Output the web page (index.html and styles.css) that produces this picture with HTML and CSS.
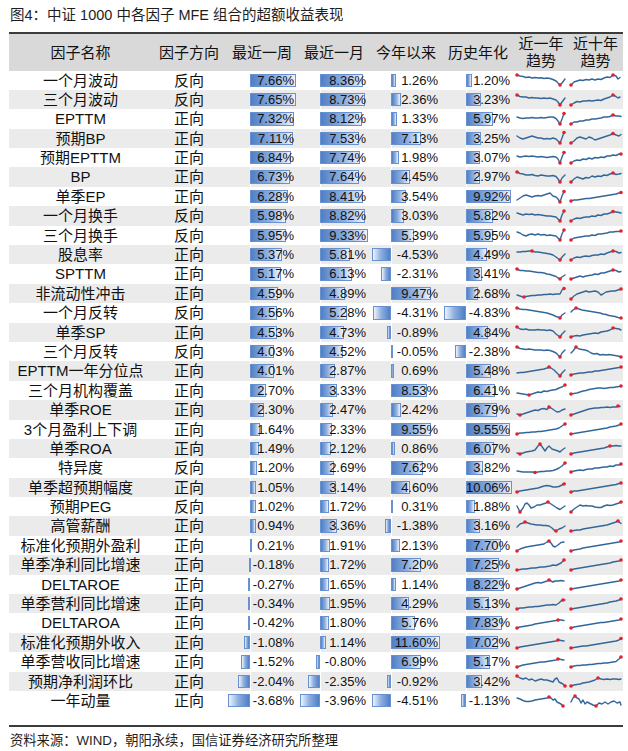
FILE: index.html
```html
<!DOCTYPE html>
<html lang="zh-CN">
<head>
<meta charset="utf-8">
<title>中证1000 MFE 组合超额收益</title>
<link rel="stylesheet" href="styles.css">
</head>
<body>
<div class="page">
  <div class="title">图4：中证 1000 中各因子 MFE 组合的超额收益表现</div>
  <div class="row head">
    <div>因子名称</div><div>因子方向</div><div>最近一周</div><div>最近一月</div><div>今年以来</div><div>历史年化</div><div>近一年<br>趋势</div><div>近十年<br>趋势</div>
  </div>
  <div class="rows">
    <div class="row"><div class="nm">一个月波动</div><div class="dir">反向</div>
      <div class="n w"><b class="bar" style="--v:7.66"></b><span>7.66%</span></div>
      <div class="n m"><b class="bar" style="--v:8.36"></b><span>8.36%</span></div>
      <div class="n y"><b class="bar" style="--v:1.26"></b><span>1.26%</span></div>
      <div class="n h"><b class="bar" style="--v:1.20"></b><span>1.20%</span></div>
      <div class="sp"><svg width="50" height="14" viewBox="0 0 50 14"><polyline points="1,2 4,3 7,3.5 10,4.5 13,4 16,5 19,4.5 22,5 25,4.8 28,5.5 31,5 34,5.5 37,6.5 40,8 42,10 44,12 46,10 49,6"/><circle cx="1" cy="2" r="1.8"/><circle cx="44" cy="12" r="1.8"/></svg></div>
      <div class="sp"><svg width="52" height="14" viewBox="0 0 52 14"><polyline points="1,12 4,9 7,8 10,7 13,7.5 16,6.5 19,7 22,6 25,7 28,6 31,6.5 34,5 37,4 40,4.5 43,2 46,3 48,6 50,4.5"/><circle cx="1" cy="12" r="1.8"/><circle cx="43" cy="2" r="1.8"/></svg></div>
    </div>
    <div class="row"><div class="nm">三个月波动</div><div class="dir">反向</div>
      <div class="n w"><b class="bar" style="--v:7.65"></b><span>7.65%</span></div>
      <div class="n m"><b class="bar" style="--v:8.73"></b><span>8.73%</span></div>
      <div class="n y"><b class="bar" style="--v:2.36"></b><span>2.36%</span></div>
      <div class="n h"><b class="bar" style="--v:3.23"></b><span>3.23%</span></div>
      <div class="sp"><svg width="50" height="14" viewBox="0 0 50 14"><polyline points="1,2 4,3.5 7,4 10,4 13,5 16,4.5 19,5 22,5 25,5.5 28,5 31,5.5 34,5 37,6 40,7 42,9 44,12 46,9 49,5"/><circle cx="1" cy="2" r="1.8"/><circle cx="44" cy="12" r="1.8"/></svg></div>
      <div class="sp"><svg width="52" height="14" viewBox="0 0 52 14"><polyline points="1,12 4,10 7,8.5 10,9 13,8 16,8 19,7.5 22,8 25,7.5 28,7 31,7.5 34,6 37,5 40,4 43,2 46,3.5 48,5 50,4"/><circle cx="1" cy="12" r="1.8"/><circle cx="43" cy="2" r="1.8"/></svg></div>
    </div>
    <div class="row"><div class="nm">EPTTM</div><div class="dir">正向</div>
      <div class="n w"><b class="bar" style="--v:7.32"></b><span>7.32%</span></div>
      <div class="n m"><b class="bar" style="--v:8.12"></b><span>8.12%</span></div>
      <div class="n y"><b class="bar" style="--v:1.33"></b><span>1.33%</span></div>
      <div class="n h"><b class="bar" style="--v:5.97"></b><span>5.97%</span></div>
      <div class="sp"><svg width="50" height="14" viewBox="0 0 50 14"><polyline points="1,5 4,6 7,6.5 10,6 13,6 16,5.5 19,6 22,6 25,5.5 28,6 31,5.5 34,5 37,5 40,6.5 42,9 44,12 46,7 48,1.5"/><circle cx="44" cy="12" r="1.8"/><circle cx="48" cy="1.5" r="1.8"/></svg></div>
      <div class="sp"><svg width="52" height="14" viewBox="0 0 52 14"><polyline points="1,12 4,10 7,10 10,9 13,9 16,8 19,8 22,7 25,7 28,6.5 31,6 34,5 37,5 40,4.5 43,3 46,4 49,4 51,4.5"/><circle cx="1" cy="12" r="1.8"/><circle cx="43" cy="3" r="1.8"/></svg></div>
    </div>
    <div class="row"><div class="nm">预期BP</div><div class="dir">正向</div>
      <div class="n w"><b class="bar" style="--v:7.11"></b><span>7.11%</span></div>
      <div class="n m"><b class="bar" style="--v:7.53"></b><span>7.53%</span></div>
      <div class="n y"><b class="bar" style="--v:7.13"></b><span>7.13%</span></div>
      <div class="n h"><b class="bar" style="--v:3.25"></b><span>3.25%</span></div>
      <div class="sp"><svg width="50" height="14" viewBox="0 0 50 14"><polyline points="1,5 4,7 7,8 10,7 13,6 16,5 19,6 22,7 25,7 28,8 31,7.5 34,8 37,7 40,8 42,10 44,12 46,7 48,1.5"/><circle cx="44" cy="12" r="1.8"/><circle cx="48" cy="1.5" r="1.8"/></svg></div>
      <div class="sp"><svg width="52" height="14" viewBox="0 0 52 14"><polyline points="1,12 4,10 7,7 10,6 13,7 16,8 19,6 22,7 25,9 28,8 31,7 34,6 37,5 40,4 43,2.5 46,4 49,5 51,3.5"/><circle cx="1" cy="12" r="1.8"/><circle cx="43" cy="2.5" r="1.8"/></svg></div>
    </div>
    <div class="row"><div class="nm">预期EPTTM</div><div class="dir">正向</div>
      <div class="n w"><b class="bar" style="--v:6.84"></b><span>6.84%</span></div>
      <div class="n m"><b class="bar" style="--v:7.74"></b><span>7.74%</span></div>
      <div class="n y"><b class="bar" style="--v:1.98"></b><span>1.98%</span></div>
      <div class="n h"><b class="bar" style="--v:3.07"></b><span>3.07%</span></div>
      <div class="sp"><svg width="50" height="14" viewBox="0 0 50 14"><polyline points="1,5 4,6 7,5.5 10,5 13,5.5 16,5 19,5.5 22,6 25,5.5 28,6 31,6.5 34,6 37,5.5 40,6 42,8 44,12 46,6 48,1.5"/><circle cx="44" cy="12" r="1.8"/><circle cx="48" cy="1.5" r="1.8"/></svg></div>
      <div class="sp"><svg width="52" height="14" viewBox="0 0 52 14"><polyline points="1,12 4,10 7,9 10,9.5 13,8 16,8.5 19,7 22,8 25,6.5 28,7 31,6 34,6.5 37,5 40,5 43,4 46,4.5 49,3 51,3"/><circle cx="1" cy="12" r="1.8"/><circle cx="51" cy="3" r="1.8"/></svg></div>
    </div>
    <div class="row"><div class="nm">BP</div><div class="dir">正向</div>
      <div class="n w"><b class="bar" style="--v:6.73"></b><span>6.73%</span></div>
      <div class="n m"><b class="bar" style="--v:7.64"></b><span>7.64%</span></div>
      <div class="n y"><b class="bar" style="--v:4.45"></b><span>4.45%</span></div>
      <div class="n h"><b class="bar" style="--v:2.97"></b><span>2.97%</span></div>
      <div class="sp"><svg width="50" height="14" viewBox="0 0 50 14"><polyline points="1,2 4,3.5 7,4 10,5 13,5 16,4.5 19,5.5 22,6 25,5 28,5.5 31,6 34,6 37,5.5 40,6.5 42,9 44,12 46,8 49,5"/><circle cx="1" cy="2" r="1.8"/><circle cx="44" cy="12" r="1.8"/></svg></div>
      <div class="sp"><svg width="52" height="14" viewBox="0 0 52 14"><polyline points="1,12 4,9 7,7 10,8 13,9 16,7.5 19,8 22,6 25,7 28,6 31,6.5 34,5 37,5.5 40,4 43,3 46,4.5 49,4 51,3.5"/><circle cx="1" cy="12" r="1.8"/><circle cx="43" cy="3" r="1.8"/></svg></div>
    </div>
    <div class="row"><div class="nm">单季EP</div><div class="dir">正向</div>
      <div class="n w"><b class="bar" style="--v:6.28"></b><span>6.28%</span></div>
      <div class="n m"><b class="bar" style="--v:8.41"></b><span>8.41%</span></div>
      <div class="n y"><b class="bar" style="--v:3.54"></b><span>3.54%</span></div>
      <div class="n h"><b class="bar" style="--v:9.92"></b><span>9.92%</span></div>
      <div class="sp"><svg width="50" height="14" viewBox="0 0 50 14"><polyline points="1,10 4,8 7,6 10,5 13,6 16,7 19,6 22,5.5 25,6 28,5 31,4 34,3 37,6 40,7 42,9 44,12 46,6 48,1.5"/><circle cx="44" cy="12" r="1.8"/><circle cx="48" cy="1.5" r="1.8"/></svg></div>
      <div class="sp"><svg width="52" height="14" viewBox="0 0 52 14"><polyline points="1,11 4,10 7,10 10,9.5 13,9 16,8.5 19,8.5 22,8 25,7.5 28,7 31,6.5 34,6 37,5.5 40,5 43,4.5 46,4 49,3 51,2.5"/><circle cx="1" cy="11" r="1.8"/><circle cx="51" cy="2.5" r="1.8"/></svg></div>
    </div>
    <div class="row"><div class="nm">一个月换手</div><div class="dir">反向</div>
      <div class="n w"><b class="bar" style="--v:5.98"></b><span>5.98%</span></div>
      <div class="n m"><b class="bar" style="--v:8.82"></b><span>8.82%</span></div>
      <div class="n y"><b class="bar" style="--v:3.03"></b><span>3.03%</span></div>
      <div class="n h"><b class="bar" style="--v:5.82"></b><span>5.82%</span></div>
      <div class="sp"><svg width="50" height="14" viewBox="0 0 50 14"><polyline points="1,4 4,5 7,6 10,5 13,5.5 16,5 19,6 22,5.5 25,6 28,6.5 31,7 34,7 37,7.5 40,8 42,10 44,12 46,6 48,2"/><circle cx="44" cy="12" r="1.8"/><circle cx="48" cy="2" r="1.8"/></svg></div>
      <div class="sp"><svg width="52" height="14" viewBox="0 0 52 14"><polyline points="1,12 4,10 7,9 10,9.5 13,8.5 16,8 19,8 22,7 25,7.5 28,6 31,6.5 34,5 37,5 40,4 43,2.5 46,3 49,3.5 51,4"/><circle cx="1" cy="12" r="1.8"/><circle cx="43" cy="2.5" r="1.8"/></svg></div>
    </div>
    <div class="row"><div class="nm">三个月换手</div><div class="dir">反向</div>
      <div class="n w"><b class="bar" style="--v:5.95"></b><span>5.95%</span></div>
      <div class="n m"><b class="bar" style="--v:9.33"></b><span>9.33%</span></div>
      <div class="n y"><b class="bar" style="--v:5.39"></b><span>5.39%</span></div>
      <div class="n h"><b class="bar" style="--v:5.95"></b><span>5.95%</span></div>
      <div class="sp"><svg width="50" height="14" viewBox="0 0 50 14"><polyline points="1,4 4,5 7,7 10,8 13,6.5 16,6 19,7 22,6 25,7 28,6.5 31,7.5 34,7 37,7.5 40,8 42,10 44,12 46,6 48,2"/><circle cx="44" cy="12" r="1.8"/><circle cx="48" cy="2" r="1.8"/></svg></div>
      <div class="sp"><svg width="52" height="14" viewBox="0 0 52 14"><polyline points="1,12 4,10 7,9.5 10,9 13,8.5 16,8 19,8 22,7 25,7.5 28,6 31,6 34,5.5 37,5 40,4 43,4 46,3.5 49,3.5 51,3"/><circle cx="1" cy="12" r="1.8"/><circle cx="51" cy="3" r="1.8"/></svg></div>
    </div>
    <div class="row"><div class="nm">股息率</div><div class="dir">正向</div>
      <div class="n w"><b class="bar" style="--v:5.37"></b><span>5.37%</span></div>
      <div class="n m"><b class="bar" style="--v:5.81"></b><span>5.81%</span></div>
      <div class="n y"><b class="bar neg" style="--v:-4.53"></b><span>-4.53%</span></div>
      <div class="n h"><b class="bar" style="--v:4.49"></b><span>4.49%</span></div>
      <div class="sp"><svg width="50" height="14" viewBox="0 0 50 14"><polyline points="1,4 4,4 7,3.5 10,3.5 13,3 16,3 19,4 22,4 25,4.5 28,5 31,5.5 34,6 37,7 40,9 42,10.5 44,12 46,9 49,6"/><circle cx="16" cy="3" r="1.8"/><circle cx="44" cy="12" r="1.8"/></svg></div>
      <div class="sp"><svg width="52" height="14" viewBox="0 0 52 14"><polyline points="1,12 4,10 7,9 10,9.5 13,8.5 16,8 19,8.5 22,7.5 25,7 28,7 31,6 34,6.5 37,5 40,4 43,3 46,3.5 49,5 51,4.5"/><circle cx="1" cy="12" r="1.8"/><circle cx="43" cy="3" r="1.8"/></svg></div>
    </div>
    <div class="row"><div class="nm">SPTTM</div><div class="dir">正向</div>
      <div class="n w"><b class="bar" style="--v:5.17"></b><span>5.17%</span></div>
      <div class="n m"><b class="bar" style="--v:6.13"></b><span>6.13%</span></div>
      <div class="n y"><b class="bar neg" style="--v:-2.31"></b><span>-2.31%</span></div>
      <div class="n h"><b class="bar" style="--v:3.41"></b><span>3.41%</span></div>
      <div class="sp"><svg width="50" height="14" viewBox="0 0 50 14"><polyline points="1,2 4,3.5 7,3.5 10,4 13,4 16,4.5 19,5 22,5.5 25,5.5 28,6 31,7 34,7.5 37,8.5 40,9.5 42,11 44,12 46,10 49,8"/><circle cx="1" cy="2" r="1.8"/><circle cx="44" cy="12" r="1.8"/></svg></div>
      <div class="sp"><svg width="52" height="14" viewBox="0 0 52 14"><polyline points="1,12 4,11 7,10 10,9 13,10 16,9 19,8.5 22,8 25,7 28,7.5 31,6 34,6 37,5 40,4 43,3 46,3.5 49,5 51,4.5"/><circle cx="1" cy="12" r="1.8"/><circle cx="43" cy="3" r="1.8"/></svg></div>
    </div>
    <div class="row"><div class="nm">非流动性冲击</div><div class="dir">正向</div>
      <div class="n w"><b class="bar" style="--v:4.59"></b><span>4.59%</span></div>
      <div class="n m"><b class="bar" style="--v:4.89"></b><span>4.89%</span></div>
      <div class="n y"><b class="bar" style="--v:9.47"></b><span>9.47%</span></div>
      <div class="n h"><b class="bar" style="--v:2.68"></b><span>2.68%</span></div>
      <div class="sp"><svg width="50" height="14" viewBox="0 0 50 14"><polyline points="1,8 4,9 7,10 10,9.5 13,9 16,8.5 19,8.5 22,8 25,8 28,7.5 31,7.5 34,7 37,7.5 40,7 42,7 44,7 46,3 48,1.5"/><circle cx="8" cy="10" r="1.8"/><circle cx="48" cy="1.5" r="1.8"/></svg></div>
      <div class="sp"><svg width="52" height="14" viewBox="0 0 52 14"><polyline points="1,12 4,9 7,7 10,6 13,5 16,4 19,5 22,4.5 25,4 28,5 31,8 33,7 36,5 39,4.5 42,4 45,4 48,3 51,2"/><circle cx="1" cy="12" r="1.8"/><circle cx="51" cy="2" r="1.8"/></svg></div>
    </div>
    <div class="row"><div class="nm">一个月反转</div><div class="dir">反向</div>
      <div class="n w"><b class="bar" style="--v:4.56"></b><span>4.56%</span></div>
      <div class="n m"><b class="bar" style="--v:5.28"></b><span>5.28%</span></div>
      <div class="n y"><b class="bar neg" style="--v:-4.31"></b><span>-4.31%</span></div>
      <div class="n h"><b class="bar neg" style="--v:-4.83"></b><span>-4.83%</span></div>
      <div class="sp"><svg width="50" height="14" viewBox="0 0 50 14"><polyline points="1,2 4,3 7,3.5 10,3.5 13,4 16,4.5 19,5 22,5.5 25,6 28,6.5 31,7 34,8 37,9 40,10.5 42,11 44,12 46,9 49,7"/><circle cx="1" cy="2" r="1.8"/><circle cx="44" cy="12" r="1.8"/></svg></div>
      <div class="sp"><svg width="52" height="14" viewBox="0 0 52 14"><polyline points="1,6 3,4 6,2 9,3 12,4 15,4.5 18,5 21,5.5 24,6 27,6.5 30,7 33,8 36,8.5 39,9.5 42,10 45,10.5 48,11.5 51,12"/><circle cx="6" cy="2" r="1.8"/><circle cx="51" cy="12" r="1.8"/></svg></div>
    </div>
    <div class="row"><div class="nm">单季SP</div><div class="dir">正向</div>
      <div class="n w"><b class="bar" style="--v:4.53"></b><span>4.53%</span></div>
      <div class="n m"><b class="bar" style="--v:4.73"></b><span>4.73%</span></div>
      <div class="n y"><b class="bar neg" style="--v:-0.89"></b><span>-0.89%</span></div>
      <div class="n h"><b class="bar" style="--v:4.84"></b><span>4.84%</span></div>
      <div class="sp"><svg width="50" height="14" viewBox="0 0 50 14"><polyline points="1,2 4,4 7,4.5 10,4 13,5 16,5 19,5 22,4.5 25,5 28,5 31,5.5 34,5 37,6 40,9 42,10.5 44,12 46,9 49,6"/><circle cx="1" cy="2" r="1.8"/><circle cx="44" cy="12" r="1.8"/></svg></div>
      <div class="sp"><svg width="52" height="14" viewBox="0 0 52 14"><polyline points="1,12 4,11 7,10.5 10,11 13,10 16,9.5 19,9 22,8.5 25,8 28,8.5 31,7 34,6.5 37,6 40,5 43,3 46,3.5 49,4 51,5"/><circle cx="1" cy="12" r="1.8"/><circle cx="43" cy="3" r="1.8"/></svg></div>
    </div>
    <div class="row"><div class="nm">三个月反转</div><div class="dir">反向</div>
      <div class="n w"><b class="bar" style="--v:4.03"></b><span>4.03%</span></div>
      <div class="n m"><b class="bar" style="--v:4.52"></b><span>4.52%</span></div>
      <div class="n y"><b class="bar neg" style="--v:-0.05"></b><span>-0.05%</span></div>
      <div class="n h"><b class="bar neg" style="--v:-2.38"></b><span>-2.38%</span></div>
      <div class="sp"><svg width="50" height="14" viewBox="0 0 50 14"><polyline points="1,2 4,3.5 7,4 10,4.5 13,4 16,4.5 19,5 22,5 25,5 28,5.5 31,5 34,5.5 37,6.5 40,8 42,10 44,12 46,8 49,5"/><circle cx="1" cy="2" r="1.8"/><circle cx="44" cy="12" r="1.8"/></svg></div>
      <div class="sp"><svg width="52" height="14" viewBox="0 0 52 14"><polyline points="1,8 3,6 6,2 9,4 12,4.5 15,5 18,6 21,8 24,9 27,8.5 30,10 33,9.5 36,10 39,9.5 42,10 45,10.5 48,11 51,12"/><circle cx="6" cy="2" r="1.8"/><circle cx="51" cy="12" r="1.8"/></svg></div>
    </div>
    <div class="row"><div class="nm">EPTTM一年分位点</div><div class="dir">正向</div>
      <div class="n w"><b class="bar" style="--v:4.01"></b><span>4.01%</span></div>
      <div class="n m"><b class="bar" style="--v:2.87"></b><span>2.87%</span></div>
      <div class="n y"><b class="bar" style="--v:0.69"></b><span>0.69%</span></div>
      <div class="n h"><b class="bar" style="--v:5.48"></b><span>5.48%</span></div>
      <div class="sp"><svg width="50" height="14" viewBox="0 0 50 14"><polyline points="1,9 4,8.5 7,8.5 10,8 13,7.5 16,7 19,6.5 22,6 25,5.5 28,5 31,4 33,3 35,4 38,6 41,9 44,12 46,9 49,6"/><circle cx="33" cy="3" r="1.8"/><circle cx="44" cy="12" r="1.8"/></svg></div>
      <div class="sp"><svg width="52" height="14" viewBox="0 0 52 14"><polyline points="1,11 4,10 7,9.5 10,9 13,9 16,8.5 19,8 22,8 25,7 28,7 31,6.5 34,6 37,5.5 40,5 43,4.5 46,4 49,3.5 51,3"/><circle cx="1" cy="11" r="1.8"/><circle cx="51" cy="3" r="1.8"/></svg></div>
    </div>
    <div class="row"><div class="nm">三个月机构覆盖</div><div class="dir">正向</div>
      <div class="n w"><b class="bar" style="--v:2.70"></b><span>2.70%</span></div>
      <div class="n m"><b class="bar" style="--v:3.33"></b><span>3.33%</span></div>
      <div class="n y"><b class="bar" style="--v:8.53"></b><span>8.53%</span></div>
      <div class="n h"><b class="bar" style="--v:6.41"></b><span>6.41%</span></div>
      <div class="sp"><svg width="50" height="14" viewBox="0 0 50 14"><polyline points="1,10 4,10.5 7,11 10,11.5 13,12 16,11 19,10 22,9 25,9.5 28,8 31,8.5 34,7.5 37,7 40,6.5 43,5 46,4 48,2.5 49,2"/><circle cx="13" cy="12" r="1.8"/><circle cx="49" cy="2" r="1.8"/></svg></div>
      <div class="sp"><svg width="52" height="14" viewBox="0 0 52 14"><polyline points="1,11 4,10.5 7,10 10,9 13,8 16,7.5 19,6.5 22,6 25,5.5 28,5 31,5 34,5.5 37,5 40,4.5 43,4.5 46,4 49,3.5 51,3"/><circle cx="1" cy="11" r="1.8"/><circle cx="51" cy="3" r="1.8"/></svg></div>
    </div>
    <div class="row"><div class="nm">单季ROE</div><div class="dir">正向</div>
      <div class="n w"><b class="bar" style="--v:2.30"></b><span>2.30%</span></div>
      <div class="n m"><b class="bar" style="--v:2.47"></b><span>2.47%</span></div>
      <div class="n y"><b class="bar" style="--v:2.42"></b><span>2.42%</span></div>
      <div class="n h"><b class="bar" style="--v:6.79"></b><span>6.79%</span></div>
      <div class="sp"><svg width="50" height="14" viewBox="0 0 50 14"><polyline points="1,11 4,12 7,11 10,10 13,9 16,8 19,7 22,7.5 25,6 28,5.5 31,6.5 33,4 35,5 38,7 41,9 44,8.5 46,7 49,6"/><circle cx="4" cy="12" r="1.8"/><circle cx="33" cy="4" r="1.8"/></svg></div>
      <div class="sp"><svg width="52" height="14" viewBox="0 0 52 14"><polyline points="1,12 4,11 7,10 10,9 13,8 16,7 19,6 22,5.5 25,5 28,5 31,4.5 34,4.5 37,4 40,4.5 43,4 46,4 48,3 50,3.5"/><circle cx="1" cy="12" r="1.8"/><circle cx="48" cy="3" r="1.8"/></svg></div>
    </div>
    <div class="row"><div class="nm">3个月盈利上下调</div><div class="dir">正向</div>
      <div class="n w"><b class="bar" style="--v:1.64"></b><span>1.64%</span></div>
      <div class="n m"><b class="bar" style="--v:2.33"></b><span>2.33%</span></div>
      <div class="n y"><b class="bar" style="--v:9.55"></b><span>9.55%</span></div>
      <div class="n h"><b class="bar" style="--v:9.55"></b><span>9.55%</span></div>
      <div class="sp"><svg width="50" height="14" viewBox="0 0 50 14"><polyline points="1,12 4,11 7,11 10,10.5 13,10.5 16,10 19,10 22,9.5 25,9.5 28,9 31,8.5 34,8 37,7.5 40,7 43,6 46,4 48,2.5 49,2"/><circle cx="1" cy="12" r="1.8"/><circle cx="49" cy="2" r="1.8"/></svg></div>
      <div class="sp"><svg width="52" height="14" viewBox="0 0 52 14"><polyline points="1,12 4,11.5 7,11 10,10.5 13,10 16,9.5 19,9 22,8.5 25,8 28,7.5 31,7 34,6.5 37,6 40,5 43,4.5 46,4 49,3 51,2"/><circle cx="1" cy="12" r="1.8"/><circle cx="51" cy="2" r="1.8"/></svg></div>
    </div>
    <div class="row"><div class="nm">单季ROA</div><div class="dir">正向</div>
      <div class="n w"><b class="bar" style="--v:1.49"></b><span>1.49%</span></div>
      <div class="n m"><b class="bar" style="--v:2.12"></b><span>2.12%</span></div>
      <div class="n y"><b class="bar" style="--v:0.86"></b><span>0.86%</span></div>
      <div class="n h"><b class="bar" style="--v:6.07"></b><span>6.07%</span></div>
      <div class="sp"><svg width="50" height="14" viewBox="0 0 50 14"><polyline points="1,11 4,12 7,11 10,10 13,9.5 16,9 19,8 22,4 24,2 27,6 29,9 31,6 33,4 36,7 39,8 42,9 44,10 46,8 49,6"/><circle cx="4" cy="12" r="1.8"/><circle cx="24" cy="2" r="1.8"/></svg></div>
      <div class="sp"><svg width="52" height="14" viewBox="0 0 52 14"><polyline points="1,12 4,11 7,10.5 10,10 13,9.5 16,9 19,8.5 22,8 25,7.5 28,7 31,6.5 34,6 37,5 40,4 43,4 46,3.5 49,4 51,4"/><circle cx="1" cy="12" r="1.8"/><circle cx="40" cy="4" r="1.8"/></svg></div>
    </div>
    <div class="row"><div class="nm">特异度</div><div class="dir">反向</div>
      <div class="n w"><b class="bar" style="--v:1.20"></b><span>1.20%</span></div>
      <div class="n m"><b class="bar" style="--v:2.69"></b><span>2.69%</span></div>
      <div class="n y"><b class="bar" style="--v:7.62"></b><span>7.62%</span></div>
      <div class="n h"><b class="bar" style="--v:3.82"></b><span>3.82%</span></div>
      <div class="sp"><svg width="50" height="14" viewBox="0 0 50 14"><polyline points="1,10 4,10.5 7,11 10,11 13,11 16,11 19,11.5 22,11 25,10.5 28,10.5 31,10 34,10 37,9.5 40,8.5 43,7 46,5 48,3 49,2"/><circle cx="19" cy="11.5" r="1.8"/><circle cx="49" cy="2" r="1.8"/></svg></div>
      <div class="sp"><svg width="52" height="14" viewBox="0 0 52 14"><polyline points="1,11 4,10 7,9.5 10,9 13,9.5 16,8.5 19,8 22,8 25,7 28,7 31,6.5 34,6 37,6 40,5 43,5.5 46,4 49,4 51,3"/><circle cx="1" cy="11" r="1.8"/><circle cx="51" cy="3" r="1.8"/></svg></div>
    </div>
    <div class="row"><div class="nm">单季超预期幅度</div><div class="dir">正向</div>
      <div class="n w"><b class="bar" style="--v:1.05"></b><span>1.05%</span></div>
      <div class="n m"><b class="bar" style="--v:3.14"></b><span>3.14%</span></div>
      <div class="n y"><b class="bar" style="--v:4.60"></b><span>4.60%</span></div>
      <div class="n h"><b class="bar" style="--v:10.06"></b><span>10.06%</span></div>
      <div class="sp"><svg width="50" height="14" viewBox="0 0 50 14"><polyline points="1,12 4,11 7,10.5 10,10 13,9.5 16,9 19,8.5 22,8 25,7 28,6 31,5.5 34,6 37,7 40,7 43,6.5 46,5 48,4 49,3.5"/><circle cx="1" cy="12" r="1.8"/><circle cx="48" cy="4" r="1.8"/></svg></div>
      <div class="sp"><svg width="52" height="14" viewBox="0 0 52 14"><polyline points="1,12 4,11 7,11 10,10.5 13,10 16,9.5 19,9 22,8.5 25,8 28,7.5 31,7 34,6.5 37,6 40,5.5 43,5 46,4.5 49,3.5 51,3"/><circle cx="1" cy="12" r="1.8"/><circle cx="51" cy="3" r="1.8"/></svg></div>
    </div>
    <div class="row"><div class="nm">预期PEG</div><div class="dir">反向</div>
      <div class="n w"><b class="bar" style="--v:1.02"></b><span>1.02%</span></div>
      <div class="n m"><b class="bar" style="--v:1.72"></b><span>1.72%</span></div>
      <div class="n y"><b class="bar" style="--v:0.31"></b><span>0.31%</span></div>
      <div class="n h"><b class="bar" style="--v:1.88"></b><span>1.88%</span></div>
      <div class="sp"><svg width="50" height="14" viewBox="0 0 50 14"><polyline points="1,6 4,12 7,8 9,4 11,3 13,5 15,8 18,7 21,5 24,5 27,4 30,3 32,2 35,4 38,6 41,8 44,9.5 46,8 49,6"/><circle cx="4" cy="12" r="1.8"/><circle cx="32" cy="2" r="1.8"/></svg></div>
      <div class="sp"><svg width="52" height="14" viewBox="0 0 52 14"><polyline points="1,12 4,9 7,7 10,5 13,6 16,5.5 19,6 22,6 25,7 28,7.5 31,7.5 34,6 37,5 40,5.5 43,5 46,4 49,3 51,2"/><circle cx="1" cy="12" r="1.8"/><circle cx="51" cy="2" r="1.8"/></svg></div>
    </div>
    <div class="row"><div class="nm">高管薪酬</div><div class="dir">正向</div>
      <div class="n w"><b class="bar" style="--v:0.94"></b><span>0.94%</span></div>
      <div class="n m"><b class="bar" style="--v:3.36"></b><span>3.36%</span></div>
      <div class="n y"><b class="bar neg" style="--v:-1.38"></b><span>-1.38%</span></div>
      <div class="n h"><b class="bar" style="--v:3.16"></b><span>3.16%</span></div>
      <div class="sp"><svg width="50" height="14" viewBox="0 0 50 14"><polyline points="1,8 4,5 7,4 9,3 12,4 15,5 18,5.5 21,6 24,6 27,6.5 30,6.5 33,7 36,9 38,11 40,12 43,10 46,9 49,7"/><circle cx="9" cy="3" r="1.8"/><circle cx="40" cy="12" r="1.8"/></svg></div>
      <div class="sp"><svg width="52" height="14" viewBox="0 0 52 14"><polyline points="1,12 4,11.5 7,11 10,11 13,10 16,9.5 19,9 22,8.5 25,8 28,7.5 31,7 34,6.5 37,6 40,5 43,4 46,3 48,2 51,4.5"/><circle cx="1" cy="12" r="1.8"/><circle cx="48" cy="2" r="1.8"/></svg></div>
    </div>
    <div class="row"><div class="nm">标准化预期外盈利</div><div class="dir">正向</div>
      <div class="n w"><b class="bar" style="--v:0.21"></b><span>0.21%</span></div>
      <div class="n m"><b class="bar" style="--v:1.91"></b><span>1.91%</span></div>
      <div class="n y"><b class="bar" style="--v:2.13"></b><span>2.13%</span></div>
      <div class="n h"><b class="bar" style="--v:7.70"></b><span>7.70%</span></div>
      <div class="sp"><svg width="50" height="14" viewBox="0 0 50 14"><polyline points="1,12 4,10 7,9 10,8 13,7.5 16,7 19,6.5 22,6 25,5.5 28,5 31,3 33,2 35,4 37,7 39,8 42,6 45,3.5 48,3"/><circle cx="1" cy="12" r="1.8"/><circle cx="33" cy="2" r="1.8"/></svg></div>
      <div class="sp"><svg width="52" height="14" viewBox="0 0 52 14"><polyline points="1,12 4,11 7,10.5 10,10 13,9 16,8.5 19,8 22,7.5 25,7 28,6.5 31,6 34,5.5 37,5 40,4.5 43,4 46,3.5 49,3 51,2"/><circle cx="1" cy="12" r="1.8"/><circle cx="51" cy="2" r="1.8"/></svg></div>
    </div>
    <div class="row"><div class="nm">单季净利同比增速</div><div class="dir">正向</div>
      <div class="n w"><b class="bar neg" style="--v:-0.18"></b><span>-0.18%</span></div>
      <div class="n m"><b class="bar" style="--v:1.72"></b><span>1.72%</span></div>
      <div class="n y"><b class="bar" style="--v:7.20"></b><span>7.20%</span></div>
      <div class="n h"><b class="bar" style="--v:7.25"></b><span>7.25%</span></div>
      <div class="sp"><svg width="50" height="14" viewBox="0 0 50 14"><polyline points="1,12 4,11.5 7,11 10,11 13,10.5 16,10 19,10 22,9.5 25,9 28,9 31,8.5 34,8 37,7 40,7.5 43,6 45,5 47,3 48,2"/><circle cx="1" cy="12" r="1.8"/><circle cx="48" cy="2" r="1.8"/></svg></div>
      <div class="sp"><svg width="52" height="14" viewBox="0 0 52 14"><polyline points="1,12 4,11 7,10.5 10,10 13,9.5 16,9 19,8.5 22,8 25,7.5 28,7 31,6.5 34,6 37,5.5 40,5 43,4 46,3.5 49,3 51,2"/><circle cx="1" cy="12" r="1.8"/><circle cx="51" cy="2" r="1.8"/></svg></div>
    </div>
    <div class="row"><div class="nm">DELTAROE</div><div class="dir">正向</div>
      <div class="n w"><b class="bar neg" style="--v:-0.27"></b><span>-0.27%</span></div>
      <div class="n m"><b class="bar" style="--v:1.65"></b><span>1.65%</span></div>
      <div class="n y"><b class="bar" style="--v:1.14"></b><span>1.14%</span></div>
      <div class="n h"><b class="bar" style="--v:8.22"></b><span>8.22%</span></div>
      <div class="sp"><svg width="50" height="14" viewBox="0 0 50 14"><polyline points="1,12 4,11 7,10 10,9 13,8 16,7 19,6 22,5.5 25,6 28,5 31,4 33,3 35,4 37,5 39,4 42,4 45,3.5 48,4"/><circle cx="1" cy="12" r="1.8"/><circle cx="33" cy="3" r="1.8"/></svg></div>
      <div class="sp"><svg width="52" height="14" viewBox="0 0 52 14"><polyline points="1,12 4,11.5 7,11 10,10.5 13,10 16,9.5 19,9 22,8.5 25,8 28,7.5 31,7 34,6.5 37,6 40,5.5 43,5 46,4.5 49,4 51,3"/><circle cx="1" cy="12" r="1.8"/><circle cx="51" cy="3" r="1.8"/></svg></div>
    </div>
    <div class="row"><div class="nm">单季营利同比增速</div><div class="dir">正向</div>
      <div class="n w"><b class="bar neg" style="--v:-0.34"></b><span>-0.34%</span></div>
      <div class="n m"><b class="bar" style="--v:1.95"></b><span>1.95%</span></div>
      <div class="n y"><b class="bar" style="--v:4.29"></b><span>4.29%</span></div>
      <div class="n h"><b class="bar" style="--v:5.13"></b><span>5.13%</span></div>
      <div class="sp"><svg width="50" height="14" viewBox="0 0 50 14"><polyline points="1,12 4,11 7,11 10,10.5 13,10 16,10 19,9.5 22,9.5 25,9 28,8.5 31,8 34,8 37,7.5 40,8 43,6 45,4 47,3 49,3"/><circle cx="1" cy="12" r="1.8"/><circle cx="47" cy="3" r="1.8"/></svg></div>
      <div class="sp"><svg width="52" height="14" viewBox="0 0 52 14"><polyline points="1,12 4,11.5 7,11 10,10.5 13,10 16,9.5 19,9 22,8.5 25,8 28,7.5 31,7 34,6.5 37,6 40,5 43,4.5 46,4 49,3 51,2"/><circle cx="1" cy="12" r="1.8"/><circle cx="51" cy="2" r="1.8"/></svg></div>
    </div>
    <div class="row"><div class="nm">DELTAROA</div><div class="dir">正向</div>
      <div class="n w"><b class="bar neg" style="--v:-0.42"></b><span>-0.42%</span></div>
      <div class="n m"><b class="bar" style="--v:1.80"></b><span>1.80%</span></div>
      <div class="n y"><b class="bar" style="--v:5.76"></b><span>5.76%</span></div>
      <div class="n h"><b class="bar" style="--v:7.83"></b><span>7.83%</span></div>
      <div class="sp"><svg width="50" height="14" viewBox="0 0 50 14"><polyline points="1,12 4,11 7,10.5 10,10 13,9.5 16,9 19,8 22,7.5 25,7 28,6.5 31,6 34,5.5 37,5 40,4.5 42,4 45,4 48,4.5"/><circle cx="1" cy="12" r="1.8"/><circle cx="42" cy="4" r="1.8"/></svg></div>
      <div class="sp"><svg width="52" height="14" viewBox="0 0 52 14"><polyline points="1,12 4,11 7,10.5 10,10 13,9.5 16,9 19,8.5 22,8 25,7.5 28,7 31,6.5 34,6.5 37,6 40,5.5 43,5 46,4.5 49,4 51,3"/><circle cx="1" cy="12" r="1.8"/><circle cx="51" cy="3" r="1.8"/></svg></div>
    </div>
    <div class="row"><div class="nm">标准化预期外收入</div><div class="dir">正向</div>
      <div class="n w"><b class="bar neg" style="--v:-1.08"></b><span>-1.08%</span></div>
      <div class="n m"><b class="bar" style="--v:1.14"></b><span>1.14%</span></div>
      <div class="n y"><b class="bar" style="--v:11.60"></b><span>11.60%</span></div>
      <div class="n h"><b class="bar" style="--v:7.02"></b><span>7.02%</span></div>
      <div class="sp"><svg width="50" height="14" viewBox="0 0 50 14"><polyline points="1,12 4,11 7,10.5 10,10 13,9.5 16,9 19,8.5 22,8 25,7.5 28,7 31,6.5 34,6 37,5.5 40,5 42,4 45,4.5 48,5"/><circle cx="1" cy="12" r="1.8"/><circle cx="42" cy="4" r="1.8"/></svg></div>
      <div class="sp"><svg width="52" height="14" viewBox="0 0 52 14"><polyline points="1,12 4,11.5 7,11 10,10.5 13,10 16,10 19,9.5 22,9 25,8.5 28,8 31,7.5 34,7 37,6.5 40,6 43,5.5 46,5 49,4 51,2.5"/><circle cx="1" cy="12" r="1.8"/><circle cx="51" cy="2.5" r="1.8"/></svg></div>
    </div>
    <div class="row"><div class="nm">单季营收同比增速</div><div class="dir">正向</div>
      <div class="n w"><b class="bar neg" style="--v:-1.52"></b><span>-1.52%</span></div>
      <div class="n m"><b class="bar neg" style="--v:-0.80"></b><span>-0.80%</span></div>
      <div class="n y"><b class="bar" style="--v:6.99"></b><span>6.99%</span></div>
      <div class="n h"><b class="bar" style="--v:5.17"></b><span>5.17%</span></div>
      <div class="sp"><svg width="50" height="14" viewBox="0 0 50 14"><polyline points="1,12 4,11 7,10 10,9.5 13,9 16,8.5 19,8 22,7.5 25,7 28,7 31,6.5 34,6 37,5.5 40,5 42,4 45,4.5 48,5"/><circle cx="1" cy="12" r="1.8"/><circle cx="42" cy="4" r="1.8"/></svg></div>
      <div class="sp"><svg width="52" height="14" viewBox="0 0 52 14"><polyline points="1,12 4,11 7,10.5 10,10.5 13,10 16,10 19,9.5 22,9.5 25,9 28,8.5 31,8.5 34,8 37,8 40,7.5 43,7 46,6.5 49,4 51,2"/><circle cx="1" cy="12" r="1.8"/><circle cx="51" cy="2" r="1.8"/></svg></div>
    </div>
    <div class="row"><div class="nm">预期净利润环比</div><div class="dir">正向</div>
      <div class="n w"><b class="bar neg" style="--v:-2.04"></b><span>-2.04%</span></div>
      <div class="n m"><b class="bar neg" style="--v:-2.35"></b><span>-2.35%</span></div>
      <div class="n y"><b class="bar neg" style="--v:-0.92"></b><span>-0.92%</span></div>
      <div class="n h"><b class="bar" style="--v:3.42"></b><span>3.42%</span></div>
      <div class="sp"><svg width="50" height="14" viewBox="0 0 50 14"><polyline points="1,2 4,4 7,5 10,4 13,6 16,5 19,7 22,6 25,5 28,6 31,6 34,7 37,8 39,5 41,4 43,8 45,9 47,10 49,12"/><circle cx="1" cy="2" r="1.8"/><circle cx="49" cy="12" r="1.8"/></svg></div>
      <div class="sp"><svg width="52" height="14" viewBox="0 0 52 14"><polyline points="1,12 4,11 7,10.5 10,10 13,9 16,8.5 19,8 22,7 25,6 28,4 31,5 34,5.5 37,5 40,5.5 43,5 46,5 49,5.5 51,5"/><circle cx="1" cy="12" r="1.8"/><circle cx="28" cy="4" r="1.8"/></svg></div>
    </div>
    <div class="row"><div class="nm">一年动量</div><div class="dir">正向</div>
      <div class="n w"><b class="bar neg" style="--v:-3.68"></b><span>-3.68%</span></div>
      <div class="n m"><b class="bar neg" style="--v:-3.96"></b><span>-3.96%</span></div>
      <div class="n y"><b class="bar neg" style="--v:-4.51"></b><span>-4.51%</span></div>
      <div class="n h"><b class="bar neg" style="--v:-1.13"></b><span>-1.13%</span></div>
      <div class="sp"><svg width="50" height="14" viewBox="0 0 50 14"><polyline points="1,4 4,5 7,6.5 10,7.5 13,7.5 16,7 19,6 22,5.5 25,5 28,4.5 31,4 33,3 35,4 37,6 39,5 41,8 43,9 45,10 47,12"/><circle cx="33" cy="3" r="1.8"/><circle cx="47" cy="12" r="1.8"/></svg></div>
      <div class="sp"><svg width="52" height="14" viewBox="0 0 52 14"><polyline points="1,8 3,4 5,2 7,4 9,5 11,9 13,6 15,10 17,8 19,9 21,10 23,11 26,12 29,9 32,10 35,8 38,10 41,8 44,7 47,9 50,8 51,11"/><circle cx="5" cy="2" r="1.8"/><circle cx="26" cy="12" r="1.8"/></svg></div>
    </div>
  </div>
  <div class="foot">资料来源：WIND，朝阳永续，国信证券经济研究所整理</div>
</div>
</body>
</html>
```

FILE: styles.css
```css
* {
  box-sizing: border-box;
}

body {
  margin: 0;
  background: #ffffff;
  color: #111111;
  font-family: "Liberation Sans", "Noto Sans CJK SC", sans-serif;
}

.page {
  padding-left: 9px;
  width: 628px;
}

.title {
  width: 614px;
  height: 34px;
  padding-left: 1px;
  font-size: 14.5px;
  line-height: 30px;
  color: #1e1e1e;
  border-bottom: 2px solid #3c3c3c;
}

.row {
  display: grid;
  grid-template-columns: 143px 74px 72px 72px 72px 72px 54px 55px;
  width: 614px;
  height: 19.4px;
}

.head {
  height: 36.5px;
  background: #d9d9d9;
  align-items: center;
  text-align: center;
  font-size: 15px;
  line-height: 17px;
  color: #111111;
}

.rows .row:nth-child(even) {
  background: #ebebeb;
}

.nm,
.dir {
  text-align: center;
  font-size: 15px;
  line-height: 19.4px;
  white-space: nowrap;
}

.n {
  position: relative;
  text-align: right;
  padding-right: 4px;
  font-size: 13px;
  line-height: 19.4px;
  white-space: nowrap;
}

.n span {
  position: relative;
}

.w { --min: -3.68; --range: 11.34; }
.m { --min: -3.96; --range: 13.29; }
.y { --min: -4.53; --range: 16.13; }
.h { --min: -4.83; --range: 14.89; }

.n::before {
  content: "";
  position: absolute;
  top: 0;
  bottom: 0;
  width: 1px;
  background: #ffffff;
  left: calc(2px + (0 - var(--min)) / var(--range) * (100% - 4px));
}

.bar {
  position: absolute;
  top: 3px;
  height: 13.4px;
  left: calc(2px + (min(var(--v), 0) - var(--min)) / var(--range) * (100% - 4px));
  width: calc(max(var(--v), -1 * var(--v)) / var(--range) * (100% - 4px));
  min-width: 2px;
  border: 1px solid #6891d2;
  background: linear-gradient(to right, #4f7fc6 0%, #8fb0e0 55%, #eef3fb 100%);
}

.bar.neg {
  background: linear-gradient(to left, #4f7fc6 0%, #8fb0e0 55%, #eef3fb 100%);
}

.sp {
  display: flex;
  align-items: center;
  justify-content: center;
}

.sp svg {
  display: block;
  overflow: visible;
}

.sp polyline {
  fill: none;
  stroke: #33679a;
  stroke-width: 1.4;
  stroke-linejoin: round;
  stroke-linecap: round;
}

.sp circle {
  fill: #e4212b;
}

.foot {
  width: 614px;
  margin-top: 14.3px;
  border-top: 2px solid #3c3c3c;
  padding-top: 3px;
  padding-left: 1px;
  font-size: 13.3px;
  line-height: 22px;
  color: #1e1e1e;
}
```
